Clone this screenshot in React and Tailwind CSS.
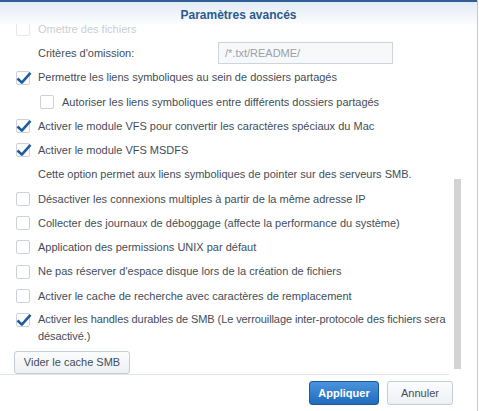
import React from 'react'

const rows = [
  { kind: 'check', checked: true, label: 'Permettre les liens symboliques au sein de dossiers partagés' },
  { kind: 'check', checked: false, indent: true, label: 'Autoriser les liens symboliques entre différents dossiers partagés' },
  { kind: 'check', checked: true, label: 'Activer le module VFS pour convertir les caractères spéciaux du Mac' },
  { kind: 'check', checked: true, label: 'Activer le module VFS MSDFS' },
  { kind: 'note', label: 'Cette option permet aux liens symboliques de pointer sur des serveurs SMB.' },
  { kind: 'check', checked: false, label: "Désactiver les connexions multiples à partir de la même adresse IP" },
  { kind: 'check', checked: false, label: 'Collecter des journaux de déboggage (affecte la performance du système)' },
  { kind: 'check', checked: false, label: 'Application des permissions UNIX par défaut' },
  { kind: 'check', checked: false, label: "Ne pas réserver d'espace disque lors de la création de fichiers" },
  { kind: 'check', checked: false, label: 'Activer le cache de recherche avec caractères de remplacement' },
]

function Check({ checked, faded }) {
  return (
    <span
      className={`relative block h-[14px] w-[14px] shrink-0 rounded-[2px] border bg-white ${
        faded ? 'border-[#e4e7ea]' : 'border-[#cdd2d8]'
      }`}
    >
      {checked && (
        <svg className="absolute -left-[2px] -top-[3px]" width="18" height="18" viewBox="0 0 18 18">
          <path d="M2.5 9.5 L6.8 13.6 L15.5 3.8" stroke="#1f5d9f" strokeWidth="2.6" fill="none" strokeLinejoin="round" />
        </svg>
      )}
    </span>
  )
}

function Row({ row }) {
  if (row.kind === 'note') {
    return (
      <div className="flex h-[24.3px] items-center pl-[38px]">
        <span>{row.label}</span>
      </div>
    )
  }
  return (
    <div className={`flex h-[24.3px] items-center gap-[8px] ${row.indent ? 'pl-[40px]' : 'pl-[16px]'}`}>
      <Check checked={row.checked} />
      <span>{row.label}</span>
    </div>
  )
}

export default function App() {
  return (
    <div
      className="relative flex h-[411px] w-[479px] flex-col overflow-hidden bg-white text-[11px] text-[#434d58]"
      style={{ fontFamily: '"Liberation Sans", Arial, sans-serif' }}
    >
      <div className="flex h-full w-[478px] flex-col border-r border-[#c3c8ce]">
        <div className="h-[2px] shrink-0 bg-[#2f5d95]" />
        <div className="z-10 flex h-[22px] shrink-0 items-center justify-center bg-gradient-to-b from-[#e3ebf5] to-[#fbfcfe] pt-[4px]">
          <span className="text-[12px] font-bold text-[#2c5a8c]">Paramètres avancés</span>
        </div>

        <div className="flex h-[351px] shrink-0">
          <div className="flex h-full w-[450px] flex-col overflow-hidden border-b border-[#e3e6e9]">
            <div className="-mt-[7px] flex h-[24.3px] items-center gap-[8px] pl-[16px] text-[#c9ced4]">
              <Check checked={false} faded />
              <span>Omettre des fichiers</span>
            </div>
            <div className="flex h-[24.3px] items-center pl-[38px]">
              <span className="w-[180px]">Critères d'omission:</span>
              <div className="flex h-[22px] w-[175px] items-center border border-[#cfd4da] bg-[#f7f8fa] px-[6px] text-[#9aa1a8]">
                /*.txt/README/
              </div>
            </div>
            {rows.map((r, i) => (
              <Row key={i} row={r} />
            ))}
            <div className="flex gap-[8px] pl-[16px] pt-[3px]">
              <div className="pt-[2px]">
                <Check checked />
              </div>
              <span className="w-[411px] shrink-0 leading-[17px] tracking-[-0.09px]">
                Activer les handles durables de SMB (Le verrouillage inter-protocole des fichiers sera désactivé.)
              </span>
            </div>
            <div className="pl-[14px] pt-[6px]">
              <button className="h-[23px] w-[116px] rounded-[3px] border border-[#c5ccd4] bg-gradient-to-b from-[#fbfcfd] to-[#edf1f5] text-[11px] text-[#434d58]">
                Vider le cache SMB
              </button>
            </div>
          </div>
          <div className="flex h-full w-[28px] pt-[155px]">
            <div className="ml-[5px] h-[190px] w-[7px] bg-[#d3d3d3]" />
          </div>
        </div>

        <div className="flex justify-end gap-[8px] pr-[24px] pt-[6px]">
          <button className="h-[24px] w-[70px] rounded-[3px] border border-[#1c5a9e] bg-gradient-to-b from-[#4a93dc] to-[#1f6bbd] text-[11px] font-bold text-white">
            Appliquer
          </button>
          <button className="h-[24px] w-[66px] rounded-[3px] border border-[#c5ccd4] bg-gradient-to-b from-[#fbfcfd] to-[#edf1f5] text-[11px] text-[#434d58]">
            Annuler
          </button>
        </div>
      </div>
    </div>
  )
}
